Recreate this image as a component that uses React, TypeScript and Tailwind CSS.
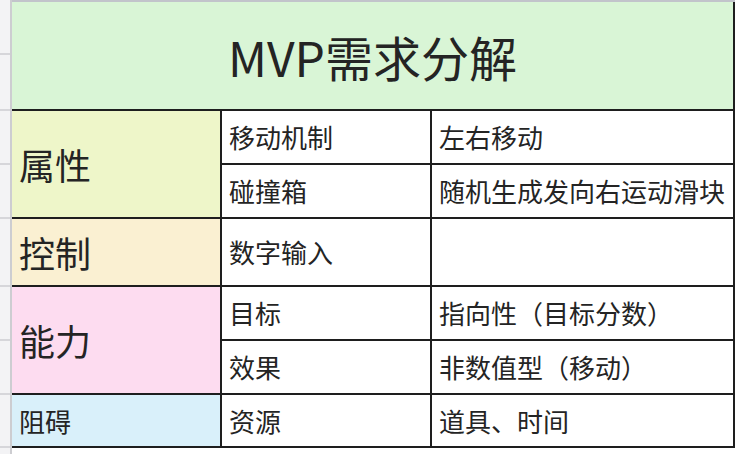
const font = "font-['Noto_Sans_CJK_SC',sans-serif]";

const stripHeights = [55, 56, 54, 54, 68, 54, 54, 53];

function Cell({ text, bg = "bg-white", big = false, className = "" }: { text?: string; bg?: string; big?: boolean; className?: string }) {
  return (
    <div className={`${bg} flex items-center pl-[7px] ${big ? "text-[36px]" : "text-[26px]"} leading-none text-[#242424] whitespace-nowrap overflow-hidden ${className}`}>
      {text}
    </div>
  );
}

export default function App() {
  return (
    <div className={`flex w-[735px] h-[454px] bg-white ${font}`}>
      {/* row header strip */}
      <div className="flex flex-col w-[12px] bg-[#f3f3f5] border-r-2 border-[#cdcdd1]">
        {stripHeights.map((h, i) => (
          <div key={i} className="border-b-2 border-[#d6d6da]" style={{ height: h }} />
        ))}
      </div>

      <div className="flex-1 flex flex-col border-t-2 border-[#c2c4cb]">
        <div className="grid grid-cols-[208px_208px_1fr] grid-rows-[107px_52px_52px_66px_52px_52px_51px] gap-[2px] bg-[#1e1e1e] pr-[2px] pb-[2px]">
          <div className="col-span-3 bg-[#d9f5d6] flex items-center justify-center text-[48px] leading-none text-[#242424]">
            MVP需求分解
          </div>

          <Cell text="属性" big bg="bg-[#eef6c9]" className="row-span-2" />
          <Cell text="移动机制" />
          <Cell text="左右移动" />
          <Cell text="碰撞箱" />
          <Cell text="随机生成发向右运动滑块" />

          <Cell text="控制" big bg="bg-[#faf0d2]" />
          <Cell text="数字输入" />
          <Cell />

          <Cell text="能力" big bg="bg-[#fddcf0]" className="row-span-2" />
          <Cell text="目标" />
          <Cell text="指向性（目标分数）" />
          <Cell text="效果" />
          <Cell text="非数值型（移动）" />

          <Cell text="阻碍" bg="bg-[#d9f0fa]" />
          <Cell text="资源" />
          <Cell text="道具、时间" />
        </div>
      </div>
    </div>
  );
}
